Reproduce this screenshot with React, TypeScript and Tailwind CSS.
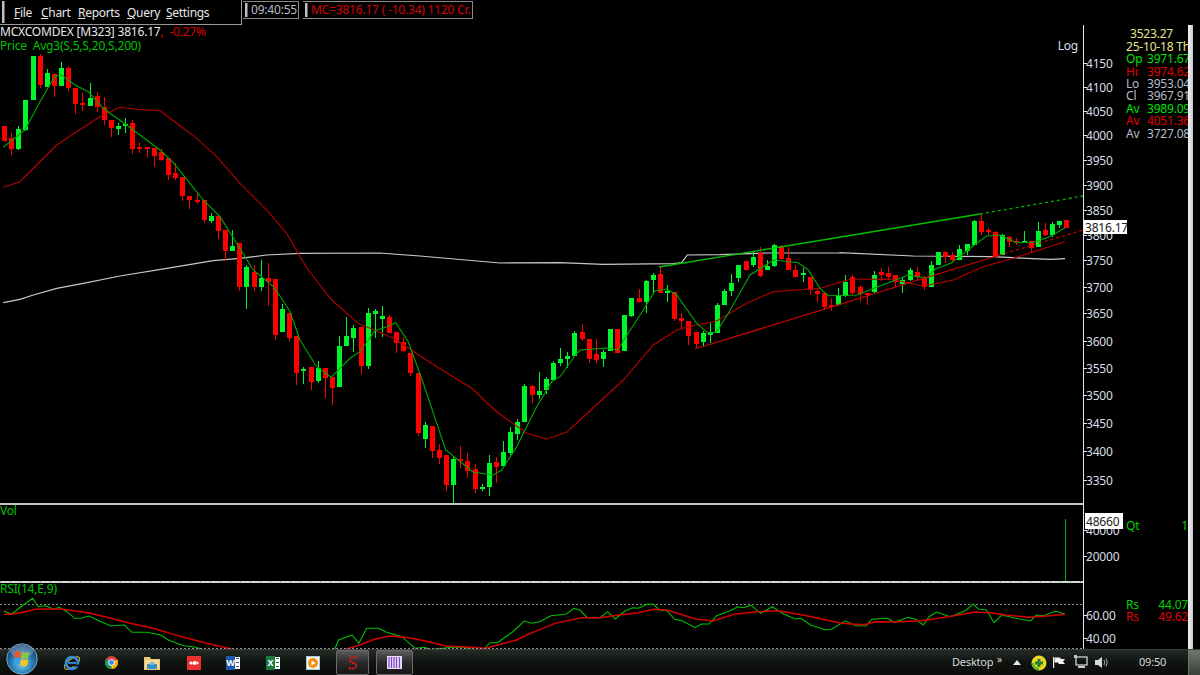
type Row = [string, number, number, number, number];

// candles read off the chart: colour, wick top, body top, body bottom, wick bottom
const sec1: Row[] = [
  ["r",257,257,303,303],["r",280,295,327,345],["g",258,267,327,330],["g",180,180,270,272],["g",48,48,180,180],
  ["r",42,48,135,145],["g",88,98,140,142],["r",102,102,138,170],["g",67,83,138,138],["r",78,83,143,153],
  ["r",143,143,193,222],["r",160,190,195,212],["g",130,173,197,197],["r",155,168,200,215],["r",172,200,240,255],
  ["r",240,240,265,290],["g",250,259,267,285],["g",235,251,259,280],["r",240,248,328,342],["r",305,320,328,338],
  ["r",322,322,328,355],["r",325,325,347,380],["r",328,335,360,362],["r",355,355,405,420],["r",370,400,413,420],
  ["r",410,410,468,483],["r",468,468,480,507],["r",460,481,485,492],["r",480,480,540,548],["g",518,528,542,550],
  ["r",525,528,573,597],["r",570,570,633,662],["g",570,618,632,632],["r",610,610,740,752],["g",675,680,742,808],
  ["r",675,697,740,752],["g",660,713,740,752],["r",670,715,725,797],["r",718,718,885,900],
];
const sec2: Row[] = [
  ["g",103,118,185,185],["r",130,130,205,212],["r",198,198,310,345],["g",290,296,302,342],["r",290,290,335,360],
  ["g",274,294,332,338],["r",295,295,323,385],["r",320,320,355,405],["g",197,228,352,352],["g",142,197,228,228],
  ["g",165,173,203,245],["r",172,172,287,312],["g",115,128,287,298],["g",116,124,133,203],["g",108,139,147,200],
  ["r",136,142,190,190],["r",186,186,218,250],["r",202,216,243,246],["r",248,248,310,317],["r",310,310,490,497],
  ["g",457,465,508,535],["r",468,468,543,565],["r",522,540,565,582],["r",555,555,645,663],["g",560,568,645,698],
  ["r",527,566,573,593],["r",548,572,603,625],["r",583,598,657,668],["g",643,650,655,662],["g",556,580,650,678],
  ["r",562,576,590,640],["g",514,545,587,587],["g",472,487,550,555],["g",448,456,492,510],["g",343,347,456,456],
  ["r",344,347,376,398],["g",307,363,374,388],["g",320,327,360,372],["g",272,278,329,329],["g",235,266,279,288],
  ["g",246,258,268,295],["g",183,188,258,258],
];
const sec3: Row[] = [
  ["r",312,336,358,362],["r",358,358,416,428],["r",358,402,420,428],["g",390,395,416,440],["g",328,328,392,392],
  ["r",326,326,398,400],["g",286,286,392,392],["g",234,234,289,290],["r",208,234,246,250],["g",180,183,246,280],
  ["g",158,165,180,222],["r",140,162,218,218],["g",195,212,218,245],["r",215,215,298,302],["r",280,294,302,325],
  ["r",303,303,347,375],["r",335,335,372,388],["g",333,340,366,382],["g",308,337,344,368],["g",250,255,338,338],
  ["g",207,212,254,254],["g",163,190,212,228],["g",134,134,175,185],["r",124,124,150,150],["g",97,112,136,142],
  ["r",80,100,168,170],["g",120,137,149,149],["g",72,75,138,140],["r",75,77,118,120],["r",80,115,150,150],
  ["r",135,150,170,172],["g",143,159,163,187],["r",170,170,210,225],["r",208,213,221,246],
];
const sec4: Row[] = [
  ["r",340,340,382,390],["r",355,375,379,392],["g",325,348,375,378],["g",285,305,348,350],["r",285,290,340,345],
  ["r",315,322,342,365],["r",338,340,345,375],["g",272,285,335,340],["r",265,275,285,302],["r",262,280,290,300],
  ["r",285,285,305,322],["g",295,300,312,338],["g",265,270,300,302],["r",262,275,290,302],["r",288,290,322,330],
  ["g",243,255,320,320],["g",215,215,254,254],["r",212,217,230,250],["r",217,225,241,243],["g",195,208,240,240],
  ["g",193,193,212,225],["g",120,122,195,195],["r",103,122,155,165],["r",145,150,156,165],["r",153,155,232,232],
  ["g",163,165,225,225],["r",168,170,187,200],["r",173,183,187,195],["g",153,183,190,190],["r",183,183,205,215],
  ["g",127,153,200,200],["r",130,150,165,167],["g",127,132,165,170],["g",122,122,135,145],["r",120,120,143,143],
];
const candles = [
  ...sec1.map((c) => [c[0], ...c.slice(1).map((v) => 40 + (v as number) / 3)]),
  ...sec2.map((c) => [c[0], ...c.slice(1).map((v) => 270 + (v as number) / 3)]),
  ...sec3.map((c) => [c[0], ...c.slice(1).map((v) => 220 + (v as number) / 3)]),
  ...sec4.map((c) => [c[0], ...c.slice(1).map((v) => 180 + (v as number) / 3)]),
] as [string, number, number, number, number][];

const pts = (ox: number, oy: number, list: number[][], sx = 3, sy = 3) =>
  list.map(([x, y]) => `${(ox + x / sx).toFixed(1)},${(oy + y / sy).toFixed(1)}`).join(" ");

const ma5 = [
  pts(0, 40, [[10,322],[75,270],[120,185],[165,108],[185,105],[225,135],[265,155],[310,205],[372,250],[420,285],[480,330],[520,368],[570,430],[610,480],[660,530],[710,610],[760,690],[820,740]]),
  pts(280, 270, [[0,78],[30,125],[60,210],[110,290],[153,322],[210,265],[240,245],[285,182],[320,170],[347,158],[385,215],[430,340],[497,540],[580,607],[640,615],[665,600],[710,530],[770,410],[815,335]]),
  pts(560, 220, [[0,470],[50,400],[62,390],[140,384],[175,390],[190,362],[250,270],[285,212],[320,207],[350,225],[410,310],[445,340],[470,335],[505,280],[570,165],[640,120],[715,128],[745,150]]),
  pts(820, 180, [[0,325],[25,347],[110,345],[170,322],[240,295],[265,285],[320,295],[345,268],[395,248],[450,205],[500,168],[540,165],[590,188],[640,187],[690,170],[735,143]]),
].join(" ");

const ma20 = [
  pts(0, 40, [[10,442],[60,425],[110,375],[170,315],[230,275],[300,230],[360,202],[410,208],[480,212],[530,250],[590,295],[650,350],[720,430],[800,510],[860,580],[900,650]]),
  pts(280, 270, [[85,0],[155,90],[235,160],[340,205],[470,290],[575,355],[650,425],[740,490],[800,507],[860,487],[900,450]]),
  pts(560, 220, [[190,480],[280,375],[350,330],[395,318],[470,303],[560,250],[640,215],[750,207]]),
  pts(820, 180, [[0,325],[90,298],[210,297],[270,310],[310,318],[400,300],[490,260],[590,232],[735,185]]),
].join(" ");

const ma200 =
  pts(0, 40, [[10,788],[60,778],[100,765],[170,745],[250,730],[360,708],[500,685],[640,662],[720,655],[800,645],[900,640]]) +
  " 380,253 420,256 500,263 " +
  pts(560, 220, [[0,128],[130,133],[340,131],[365,128],[382,105],[480,104],[620,99],[840,99]]) +
  " " +
  pts(820, 180, [[60,218],[280,228],[520,230],[620,235],[690,238],[735,236]]);

const S = 1568 / 600;
const rsiGreen = [
  pts(0, 575, [[10,108],[30,118],[55,95],[85,70],[100,95],[120,92],[140,103],[155,97],[175,110],[195,130],[210,130],[232,123],[260,138],[290,153],[325,150],[345,172],[385,172],[420,180],[440,195],[480,212],[510,216],[525,222],[590,240],[850,240],[875,222],[885,195],[920,180],[938,205],[958,160],[990,160],[1010,172],[1050,185],[1070,205],[1085,220],[1110,217],[1125,224],[1180,217],[1210,216],[1240,225],[1265,222],[1280,203],[1300,203],[1340,170],[1370,138],[1390,145],[1410,140],[1440,122],[1480,117],[1500,100],[1515,105],[1535,128],[1568,128]], S),
  pts(600, 500, [[20,335],[40,357],[65,333],[85,323],[100,325],[125,312],[140,313],[155,330],[175,332],[195,358],[215,362],[248,383],[265,372],[285,372],[305,347],[340,332],[360,320],[375,323],[395,316],[420,340],[450,320],[480,342],[510,357],[525,355],[550,375],[590,390],[605,388],[640,363],[670,377],[695,378],[710,358],[750,355],[770,367],[805,352],[825,358],[845,375],[860,350],[880,336],[915,350],[955,332],[975,312],[990,328],[1010,330],[1030,368],[1050,345],[1095,357],[1125,363],[1140,345],[1160,347],[1190,333],[1215,343]], S),
].join(" ");
const rsiRed = [
  pts(0, 575, [[10,118],[30,118],[60,112],[95,102],[160,102],[230,113],[290,130],[340,145],[400,160],[480,187],[540,205],[605,222],[680,240],[860,240],[905,222],[940,210],[980,192],[1020,183],[1070,188],[1120,200],[1165,213],[1210,215],[1270,220],[1350,195],[1380,178],[1450,145],[1520,128],[1568,128]], S),
  pts(600, 500, [[50,345],[100,338],[140,328],[175,330],[250,357],[295,363],[350,343],[410,335],[465,332],[530,345],[630,370],[690,374],[720,365],[770,366],[840,362],[910,350],[980,336],[1020,338],[1060,345],[1120,352],[1170,348],[1215,343]], S),
].join(" ");

const priceTicks: [string, number][] = [
  ["4150",63],["4100",87],["4050",111],["4000",135],["3950",160],["3900",185],["3850",210],["3800",235],
  ["3750",260],["3700",287],["3650",313],["3600",341],["3550",368],["3500",395],["3450",423],["3400",451],["3350",480],
];

const axisFont = { fontFamily: "inherit" };

const Tick = ({ y, label }: { y: number; label: string }) => (
  <g>
    <rect x={1083} y={y} width={4} height={1} fill="#e8e8e8" />
    <text x={1086} y={y + 4.5} fontSize={12} fill="#d8dee6" style={axisFont}>{label}</text>
  </g>
);

const ValueBox = ({ x, y, w, h, label }: { x: number; y: number; w: number; h: number; label: string }) => (
  <g>
    <rect x={x} y={y} width={w} height={h} fill="#ffffff" />
    <text x={x + 1} y={y + h / 2 + 4.5} fontSize={12} fill="#202020" style={axisFont}>{label}</text>
  </g>
);

const PricePanel = () => (
  <svg viewBox="0 52 1126 453" className="block w-[1126px] h-[453px] overflow-visible">
    <polyline points={ma200} fill="none" stroke="#c8c8c8" strokeWidth={1.2} />
    {candles.map((c, i) => {
      const x = Math.round(4 + 7.13 * i);
      const fill = c[0] === "g" ? "#00f52c" : "#ff0000";
      return (
        <g key={i} fill={fill} shapeRendering="crispEdges">
          <rect x={x} y={c[1]} width={1} height={Math.max(c[4] - c[1], 1)} />
          <rect x={x - 2} y={c[2]} width={5} height={Math.max(c[3] - c[2], 2)} />
        </g>
      );
    })}
    <polyline points={ma20} fill="none" stroke="#b80000" strokeWidth={1.1} />
    <polyline points={ma5} fill="none" stroke="#00a800" strokeWidth={1.1} />
    <line x1={695} y1={349} x2={993} y2={257} stroke="#c80000" strokeWidth={1.3} />
    <line x1={993} y1={257} x2={1083} y2={230} stroke="#c80000" strokeWidth={1.3} strokeDasharray="3 3" />
    <line x1={659} y1={267} x2={980} y2={214} stroke="#00c000" strokeWidth={1.3} />
    <line x1={980} y1={214} x2={1083} y2={196} stroke="#00b000" strokeWidth={1.3} strokeDasharray="3 3" />
    <rect x={0} y={503} width={1083} height={2} fill="#c4c4c4" />
    <rect x={1083} y={52} width={1} height={453} fill="#e8e8e8" />
    {priceTicks.map(([label, y]) => <Tick key={label} y={y} label={label} />)}
    <ValueBox x={1084} y={220} w={43} h={14} label="3816.17" />
  </svg>
);

const PanelLabel = ({ text }: { text: string }) => (
  <div className="absolute left-0 top-[-1px] text-[12px] leading-[14px] text-[#00c000]">{text}</div>
);

const VolPanel = () => (
  <div className="relative h-[78px]">
    <PanelLabel text="Vol" />
    <svg viewBox="0 505 1126 78" className="block w-[1126px] h-[78px] overflow-visible">
      <rect x={1065} y={519} width={1} height={63} fill="#00b000" />
      <rect x={0} y={581} width={1083} height={2} fill="#d8d8d8" />
      <line x1={0} y1={581.5} x2={1083} y2={581.5} stroke="#00c000" strokeDasharray="1 9" />
      <rect x={1083} y={505} width={1} height={78} fill="#e8e8e8" />
      <Tick y={530} label="40000" />
      <Tick y={556} label="20000" />
      <ValueBox x={1085} y={513} w={38} h={16} label="48660" />
    </svg>
  </div>
);

const RsiPanel = () => (
  <div className="relative h-[66px]">
    <PanelLabel text="RSI(14,E,9)" />
    <svg viewBox="0 583 1126 66" className="block w-[1126px] h-[66px]">
      <line x1={0} y1={604.5} x2={1083} y2={604.5} stroke="#909090" strokeDasharray="2 2" />
      <polyline points={rsiGreen} fill="none" stroke="#00c000" strokeWidth={1.1} />
      <polyline points={rsiRed} fill="none" stroke="#d80000" strokeWidth={1.4} />
      <line x1={0} y1={648.5} x2={1083} y2={648.5} stroke="#909090" strokeDasharray="2 2" />
      <rect x={1083} y={583} width={1} height={66} fill="#e8e8e8" />
      <Tick y={615} label="60.00" />
      <Tick y={638} label="40.00" />
    </svg>
  </div>
);

const Info = ({ label, value, color }: { label: string; value: string; color: string }) => (
  <div className={`flex h-[12.4px] items-center whitespace-nowrap ${color}`}>
    <span className="w-[21px] shrink-0">{label}</span>
    <span>{value}</span>
  </div>
);

const SidePanel = () => (
  <div className="w-[62px] overflow-hidden text-[12px] leading-none flex flex-col">
    <div className="mt-[27px] pl-[4px] h-[13px] flex items-center text-[#e6e68c]">3523.27</div>
    <div className="h-[13px] flex items-center whitespace-nowrap text-[#e6e68c]">25-10-18 Th</div>
    <Info label="Op" value="3971.67" color="text-[#00e000]" />
    <Info label="Hi" value="3974.62" color="text-[#e00000]" />
    <Info label="Lo" value="3953.04" color="text-[#b4bcc8]" />
    <Info label="Cl" value="3967.91" color="text-[#b4bcc8]" />
    <Info label="Av" value="3989.09" color="text-[#00e000]" />
    <Info label="Av" value="4051.36" color="text-[#e00000]" />
    <Info label="Av" value="3727.08" color="text-[#b4bcc8]" />
    <div className="mt-[380px] h-[13px] flex justify-between items-center text-[#00d000]">
      <span>Qt</span>
      <span>1</span>
    </div>
    <div className="mt-[66px] h-[12px] flex justify-between items-center text-[#00d000] whitespace-nowrap">
      <span>Rs</span>
      <span>44.07</span>
    </div>
    <div className="h-[12px] flex justify-between items-center text-[#e00000] whitespace-nowrap">
      <span>Rs</span>
      <span>49.62</span>
    </div>
  </div>
);

const Boxed = ({ className, children }: { className: string; children: React.ReactNode }) => (
  <div className={`flex items-center border-r border-b border-t border-[#8a8a8a] ${className}`}>
    <div className="w-[3px] self-stretch my-[1px] ml-[2px] bg-[#c0c0c0] border-r border-[#606060] shrink-0" />
    {children}
  </div>
);

const TopBar = () => (
  <div className="flex h-[25px] items-start text-[12px]">
    <Boxed className="w-[242px] h-[25px] border-t-0 border-[#9a9a9a]">
      <div className="flex ml-[9px] pt-[2px] text-[#e8e8e8] tracking-[-0.3px]">
        <span className="w-[27px]"><u>F</u>ile</span>
        <span className="w-[37px]"><u>C</u>hart</span>
        <span className="w-[49px]"><u>R</u>eports</span>
        <span className="w-[39px]"><u>Q</u>uery</span>
        <span><u>S</u>ettings</span>
      </div>
    </Boxed>
    <Boxed className="ml-[1px] mt-[1px] w-[56px] h-[18px] text-[#b4bcc8]">
      <span className="ml-[3px]">09:40:55</span>
    </Boxed>
    <Boxed className="ml-[4px] mt-[1px] w-[170px] h-[18px] text-[#d80000]">
      <span className="ml-[3px] whitespace-nowrap">MC=3816.17 ( -10.34) 1120 Cr.</span>
    </Boxed>
  </div>
);

const Legend = () => (
  <div className="h-[27px] w-[1084px] border-r border-[#e8e8e8] flex justify-between text-[12px] leading-[13px]">
    <div className="flex flex-col">
      <div className="h-[14px] leading-[14px] whitespace-nowrap text-[#e8e8e8]">
        MCXCOMDEX [M323] 3816.17<span className="text-[#d80000]">,&nbsp; -0.27%</span>
      </div>
      <div className="whitespace-nowrap text-[#00c000]">Price&nbsp; Avg3(S,5,S,20,S,200)</div>
    </div>
    <div className="mr-[5px] mt-[14px] text-[#d8dee6]">Log</div>
  </div>
);

const Orb = () => (
  <svg width="34" height="34" viewBox="0 0 38 38" className="absolute left-[5px] top-[-8px]">
    <defs>
      <radialGradient id="orb" cx="50%" cy="65%" r="60%">
        <stop offset="0%" stopColor="#7fd0f0" />
        <stop offset="55%" stopColor="#2a7fb8" />
        <stop offset="100%" stopColor="#0f3f70" />
      </radialGradient>
    </defs>
    <circle cx="19" cy="19" r="17" fill="url(#orb)" stroke="#a8d0e8" strokeWidth="0.8" />
    <ellipse cx="19" cy="10" rx="13" ry="7" fill="#ffffff" opacity="0.25" />
    <path d="M11 11 Q14 9 18 11 L17 18 Q14 16 10 18 Z" fill="#f0552a" />
    <path d="M19 11 Q23 13 27 11 L26 18 Q22 20 18 18 Z" fill="#8ec63f" />
    <path d="M10 19 Q14 17 17 19 L16 26 Q13 24 9 26 Z" fill="#3aa0e8" />
    <path d="M18 19 Q22 21 26 19 L25 26 Q21 28 17 26 Z" fill="#fcc419" />
  </svg>
);

const IeIcon = () => (
  <svg width="18" height="18" viewBox="0 0 18 18">
    <ellipse cx="9" cy="9" rx="9" ry="4" fill="none" stroke="#e8b030" strokeWidth="1" transform="rotate(-35 9 9)" />
    <circle cx="9" cy="9" r="6" fill="none" stroke="#2f8fe0" strokeWidth="2.6" />
    <rect x="5" y="8" width="8" height="1.8" fill="#2f8fe0" />
    <rect x="11" y="10.5" width="5" height="2" fill="#101410" />
  </svg>
);

const ChromeIcon = () => (
  <svg width="13" height="13" viewBox="0 0 24 24">
    <circle cx="12" cy="12" r="12" fill="#db4437" />
    <path d="M12 12 L1.6 6 A12 12 0 0 0 12 24 Z" fill="#0f9d58" />
    <path d="M12 12 L12 24 A12 12 0 0 0 22.4 6 Z" fill="#f4b400" />
    <circle cx="12" cy="12" r="6" fill="#ffffff" />
    <circle cx="12" cy="12" r="4.6" fill="#4285f4" />
  </svg>
);

const FolderIcon = () => (
  <svg width="16" height="15" viewBox="0 0 16 15">
    <path d="M0 2 H6 L7 4 H16 V15 H0 Z" fill="#e8c870" />
    <rect x="1" y="5" width="14" height="9" fill="#f4dc98" />
    <rect x="3" y="9" width="10" height="5" fill="#3a90c8" />
    <rect x="6" y="7" width="4" height="3" fill="#70b8e0" />
  </svg>
);

const RedAppIcon = () => (
  <svg width="14" height="14" viewBox="0 0 14 14">
    <rect width="14" height="14" fill="#ee2f2f" />
    <circle cx="4" cy="7" r="1.6" fill="#ffffff" />
    <circle cx="7.5" cy="7" r="1.9" fill="#ffffff" />
    <path d="M9.5 5 L12 7 L9.5 9 Z" fill="#ffffff" />
  </svg>
);

const OfficeIcon = ({ letter, fill }: { letter: string; fill: string }) => (
  <div className="flex w-[14px] h-[14px] relative">
    <div className="w-[9px] h-[14px] flex items-center justify-center text-[9px] font-bold text-white" style={{ backgroundColor: fill }}>
      {letter}
    </div>
    <div className="flex-1 my-[1px] bg-white flex flex-col justify-around px-[1px]">
      <div className="h-[1px]" style={{ backgroundColor: fill }} />
      <div className="h-[1px]" style={{ backgroundColor: fill }} />
      <div className="h-[1px]" style={{ backgroundColor: fill }} />
    </div>
  </div>
);

const MediaIcon = () => (
  <svg width="14" height="14" viewBox="0 0 14 14">
    <rect width="14" height="14" fill="#9cc8e8" />
    <rect x="1" y="1" width="12" height="12" fill="#fff4e0" />
    <circle cx="7" cy="7" r="5" fill="#f09018" />
    <path d="M5.5 4.5 L9.5 7 L5.5 9.5 Z" fill="#ffffff" />
  </svg>
);

const TaskButton = ({ className, children }: { className: string; children: React.ReactNode }) => (
  <div className={`h-[25px] flex items-center justify-center rounded-[2px] border border-[#6a6a6a] bg-gradient-to-b from-[#5c5c5c] via-[#2a2a2a] to-[#161616] ${className}`}>
    {children}
  </div>
);

const Slot = ({ children, className }: { children: React.ReactNode; className: string }) => (
  <div className={`flex items-center justify-center ${className}`}>{children}</div>
);

const Taskbar = () => (
  <div className="relative h-[26px] flex items-center bg-gradient-to-b from-[#262a26] via-[#101410] to-[#0a0c0a] border-t border-[#3c3c3c] text-[#d8d8d8] text-[11px]">
    <Orb />
    <div className="ml-[52px] flex items-center">
      <Slot className="w-[40px]"><IeIcon /></Slot>
      <Slot className="w-[38px]"><ChromeIcon /></Slot>
      <Slot className="w-[44px]"><FolderIcon /></Slot>
      <Slot className="w-[39px]"><RedAppIcon /></Slot>
      <Slot className="w-[40px]"><OfficeIcon letter="W" fill="#1f5aa8" /></Slot>
      <Slot className="w-[40px]"><OfficeIcon letter="X" fill="#1a7a40" /></Slot>
      <Slot className="w-[40px]"><MediaIcon /></Slot>
    </div>
    <TaskButton className="ml-[3px] w-[33px]">
      <svg width="14" height="16" viewBox="0 0 14 16">
        <path d="M11 3 Q4 1 4 5 Q4 8 8 8 Q11 9 10 12 Q7 15 3 13" fill="none" stroke="#d81818" strokeWidth="2" strokeDasharray="3 1" />
      </svg>
    </TaskButton>
    <TaskButton className="ml-[7px] w-[37px]">
      <svg width="15" height="13" viewBox="0 0 15 13">
        <rect width="15" height="13" fill="#e8e0f8" />
        <path d="M2 1 V12 M4.5 1 V12 M7 1 V12 M9.5 1 V12 M12.5 1 V12" stroke="#8040c8" strokeWidth="1.2" />
      </svg>
    </TaskButton>
    <div className="ml-[539px] w-[40px] text-center whitespace-nowrap">Desktop</div>
    <div className="w-[15px] mb-[7px] text-[10px] text-center">»</div>
    <div className="ml-[6px] w-[8px] h-0 border-x-[4px] border-x-transparent border-b-[5px] border-b-[#e8e8e8]" />
    <Slot className="ml-[9px] w-[18px]">
      <svg width="16" height="16" viewBox="0 0 16 16">
        <circle cx="8" cy="8" r="7.5" fill="#e8d820" />
        <path d="M0.5 8 A7.5 7.5 0 0 0 8 15.5 L8 13 A5 5 0 0 1 3 8 Z" fill="#58b030" />
        <path d="M6.5 4 H9.5 V6.5 H12 V9.5 H9.5 V12 H6.5 V9.5 H4 V6.5 H6.5 Z" fill="#208030" />
      </svg>
    </Slot>
    <Slot className="ml-[2px] w-[18px]">
      <svg width="12" height="13" viewBox="0 0 12 13">
        <rect x="0" y="1" width="1.2" height="11" fill="#f0f0f0" />
        <path d="M1.5 1.5 H7 L8 3 H12 L10 5.5 L12 8 H6 L5 6.5 H1.5 Z" fill="#f0f0f0" />
      </svg>
    </Slot>
    <Slot className="ml-[4px] w-[18px]">
      <svg width="14" height="15" viewBox="0 0 14 15">
        <rect x="2" y="2" width="11" height="8" fill="none" stroke="#e0e0e0" strokeWidth="1.2" />
        <rect x="4" y="11" width="7" height="2" fill="#c8c8c8" />
        <rect x="0" y="0" width="3" height="3" fill="#c8c8c8" />
      </svg>
    </Slot>
    <Slot className="ml-[3px] w-[18px]">
      <svg width="14" height="13" viewBox="0 0 14 13">
        <path d="M0 4 H3 L7 1 V12 L3 9 H0 Z" fill="#d8d8d8" />
        <path d="M9 4 Q10.5 6.5 9 9 M11 2.5 Q13.5 6.5 11 10.5" fill="none" stroke="#b0b0b0" />
      </svg>
    </Slot>
    <div className="ml-[28px]">09:50</div>
    <div className="absolute right-0 top-0 bottom-0 w-[12px] border-l border-[#707070] bg-gradient-to-b from-[#707870] to-[#3a403a]" />
  </div>
);

export default function App() {
  return (
    <div className="w-[1200px] h-[675px] bg-black flex flex-col overflow-hidden font-['Noto_Sans',sans-serif] tracking-[-0.2px]">
      <div className="flex h-[649px]">
        <div className="w-[1126px] flex flex-col">
          <TopBar />
          <Legend />
          <PricePanel />
          <VolPanel />
          <RsiPanel />
        </div>
        <SidePanel />
        <div className="mt-[25px] w-[5px] bg-gradient-to-r from-[#f4f4f4] to-[#c8c8d0]" />
      </div>
      <Taskbar />
    </div>
  );
}
